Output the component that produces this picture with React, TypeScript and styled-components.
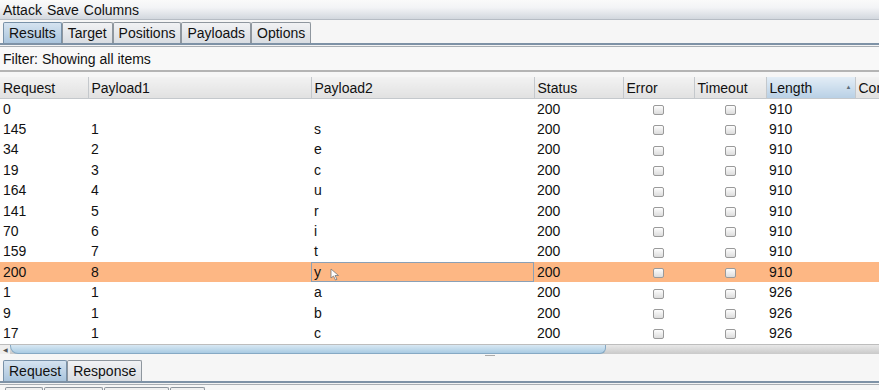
import React from 'react';
import styled, { createGlobalStyle } from 'styled-components';

interface Row {
  request: string;
  p1: string;
  p2: string;
  status: string;
  length: string;
}

const rows: Row[] = [
  { request: '0', p1: '', p2: '', status: '200', length: '910' },
  { request: '145', p1: '1', p2: 's', status: '200', length: '910' },
  { request: '34', p1: '2', p2: 'e', status: '200', length: '910' },
  { request: '19', p1: '3', p2: 'c', status: '200', length: '910' },
  { request: '164', p1: '4', p2: 'u', status: '200', length: '910' },
  { request: '141', p1: '5', p2: 'r', status: '200', length: '910' },
  { request: '70', p1: '6', p2: 'i', status: '200', length: '910' },
  { request: '159', p1: '7', p2: 't', status: '200', length: '910' },
  { request: '200', p1: '8', p2: 'y', status: '200', length: '910' },
  { request: '1', p1: '1', p2: 'a', status: '200', length: '926' },
  { request: '9', p1: '1', p2: 'b', status: '200', length: '926' },
  { request: '17', p1: '1', p2: 'c', status: '200', length: '926' },
];

const columns = [
  { label: 'Request', width: 88 },
  { label: 'Payload1', width: 223 },
  { label: 'Payload2', width: 223 },
  { label: 'Status', width: 89 },
  { label: 'Error', width: 71 },
  { label: 'Timeout', width: 72 },
  { label: 'Length', width: 89, sorted: true },
  { label: 'Comment', width: 120 },
];

const SELECTED = 8;

const GlobalStyle = createGlobalStyle`
  html, body {
    margin: 0;
    background: #f6f6f6;
    font-family: "Liberation Sans", Arial, sans-serif;
    font-size: 14px;
    color: #111;
    overflow: hidden;
  }
`;

const Window = styled.div`
  width: 879px;
  height: 390px;
  display: flex;
  flex-direction: column;
  overflow: hidden;

  & > * {
    flex-shrink: 0;
  }
`;

const MenuBar = styled.div`
  height: 19px;
  display: flex;
  align-items: center;
  gap: 5px;
  padding-left: 3px;
  background: linear-gradient(#fafafa, #f3f4f6 40%, #d2d7de);
  border-bottom: 1px solid #b6bcc4;
`;

const TabStrip = styled.div<{ $top: number }>`
  display: flex;
  align-items: flex-end;
  padding: ${p => p.$top}px 0 0 3px;
  height: 21px;
  border-bottom: 2px solid #7e92a6;
  box-shadow: 0 1px 0 #f3f3f3, 0 2px 0 #a9aeb3;
  margin-bottom: 2px;
`;

const Tab = styled.div<{ $active?: boolean }>`
  height: 21px;
  box-sizing: border-box;
  display: flex;
  align-items: center;
  padding: 0 5px;
  border: 1px solid ${p => (p.$active ? '#7891a8' : '#8e969e')};
  border-bottom: none;
  border-radius: 2px 2px 0 0;
  background: ${p =>
    p.$active
      ? 'linear-gradient(#d5e3f0, #a9c4dc)'
      : 'linear-gradient(#f1f2f4, #d9dde2)'};
`;

const FilterBar = styled.div`
  height: 23px;
  display: flex;
  align-items: center;
  padding-left: 3px;
  background: #f8f8f8;
  border-bottom: 2px solid #b4b4b4;
`;

const TableArea = styled.div`
  margin-top: 5px;
  height: 267px;
  overflow: hidden;
  background: #fff;
`;

const Table = styled.table`
  border-collapse: collapse;
  table-layout: fixed;
  width: 975px;
  font-size: 14px;
`;

const HeadCell = styled.th<{ $sorted?: boolean }>`
  height: 21px;
  padding: 0 3px;
  text-align: left;
  font-weight: normal;
  white-space: nowrap;
  overflow: hidden;
  position: relative;
  border-right: 1px solid #c4c8cc;
  border-bottom: 1px solid #c4c8cc;
  background: ${p =>
    p.$sorted ? 'linear-gradient(#e3edf6, #b9d0e5)' : 'linear-gradient(#f2f2f2, #e1e1e1)'};
`;

const SortMark = styled.span`
  position: absolute;
  right: 3px;
  top: 7px;
  font-size: 6px;
  color: #5d6b78;
`;

const BodyRow = styled.tr<{ $selected?: boolean }>`
  height: 20.4px;
  background: ${p => (p.$selected ? '#fdb784' : '#fff')};
`;

const Cell = styled.td<{ $focus?: boolean; $center?: boolean }>`
  padding: 0 3px;
  white-space: nowrap;
  overflow: hidden;
  text-align: ${p => (p.$center ? 'center' : 'left')};
  box-shadow: ${p => (p.$focus ? 'inset 0 0 0 1px #8aa0b6' : 'none')};
  position: relative;
`;

const Check = styled.span`
  display: inline-block;
  width: 9px;
  height: 8px;
  border: 1px solid #9a9a9a;
  border-radius: 2px;
  background: linear-gradient(#fdfdfd, #dcdcdc);
  vertical-align: middle;
`;

const Cursor = styled.svg`
  position: absolute;
  left: 19px;
  top: 6px;
`;

const ScrollBar = styled.div`
  height: 9px;
  display: flex;
  background: linear-gradient(#e8e8e8, #c9c9c9);
  border-top: 1px solid #bdbdbd;
`;

const ScrollArrow = styled.div`
  width: 10px;
  display: flex;
  align-items: center;
  justify-content: center;
  font-size: 6px;
  color: #555;
  background: #eee;
`;

const ScrollThumb = styled.div`
  width: 594px;
  background: linear-gradient(#d8e8f3, #a9cbe3);
  border: 1px solid #86a9c4;
  border-top: none;
  border-radius: 0 0 6px 8px;
`;

const Splitter = styled.div`
  height: 6px;
  display: flex;
  justify-content: center;
`;

const Grip = styled.div`
  width: 10px;
  height: 1px;
  margin: 1px 0 0 100px;
  background: #aaa;
`;

const BottomStrip = styled.div`
  display: flex;
  gap: 1px;
  padding: 2px 0 0 5px;
`;

const StubTab = styled.div<{ $w: number }>`
  width: ${p => p.$w}px;
  height: 8px;
  border: 1px solid #8e969e;
  border-bottom: none;
  border-radius: 2px 2px 0 0;
  background: #f0f0f0;
`;

export default function App() {
  return (
    <Window>
      <GlobalStyle />
      <MenuBar>
        <span>Attack</span>
        <span>Save</span>
        <span>Columns</span>
      </MenuBar>
      <TabStrip $top={2}>
        <Tab $active>Results</Tab>
        <Tab>Target</Tab>
        <Tab>Positions</Tab>
        <Tab>Payloads</Tab>
        <Tab>Options</Tab>
      </TabStrip>
      <FilterBar>Filter: Showing all items</FilterBar>
      <TableArea>
        <Table>
          <colgroup>
            {columns.map(c => (
              <col key={c.label} style={{ width: c.width }} />
            ))}
          </colgroup>
          <thead>
            <tr>
              {columns.map(c => (
                <HeadCell key={c.label} $sorted={c.sorted}>
                  {c.label}
                  {c.sorted && <SortMark>▲</SortMark>}
                </HeadCell>
              ))}
            </tr>
          </thead>
          <tbody>
            {rows.map((r, i) => (
              <BodyRow key={i} $selected={i === SELECTED}>
                <Cell>{r.request}</Cell>
                <Cell>{r.p1}</Cell>
                <Cell $focus={i === SELECTED}>
                  {r.p2}
                  {i === SELECTED && (
                    <Cursor width="10" height="13" viewBox="0 0 10 13">
                      <path d="M1 1 L1 10 L3.5 8 L5.5 12 L7 11.3 L5 7.5 L8.5 7.5 Z" fill="#fff" stroke="#777" strokeWidth="0.8" />
                    </Cursor>
                  )}
                </Cell>
                <Cell>{r.status}</Cell>
                <Cell $center><Check /></Cell>
                <Cell $center><Check /></Cell>
                <Cell>{r.length}</Cell>
                <Cell />
              </BodyRow>
            ))}
          </tbody>
        </Table>
      </TableArea>
      <ScrollBar>
        <ScrollArrow>◀</ScrollArrow>
        <ScrollThumb />
      </ScrollBar>
      <Splitter>
        <Grip />
      </Splitter>
      <TabStrip $top={0}>
        <Tab $active>Request</Tab>
        <Tab>Response</Tab>
      </TabStrip>
      <BottomStrip>
        <StubTab $w={36} />
        <StubTab $w={57} />
        <StubTab $w={63} />
        <StubTab $w={33} />
      </BottomStrip>
    </Window>
  );
}
